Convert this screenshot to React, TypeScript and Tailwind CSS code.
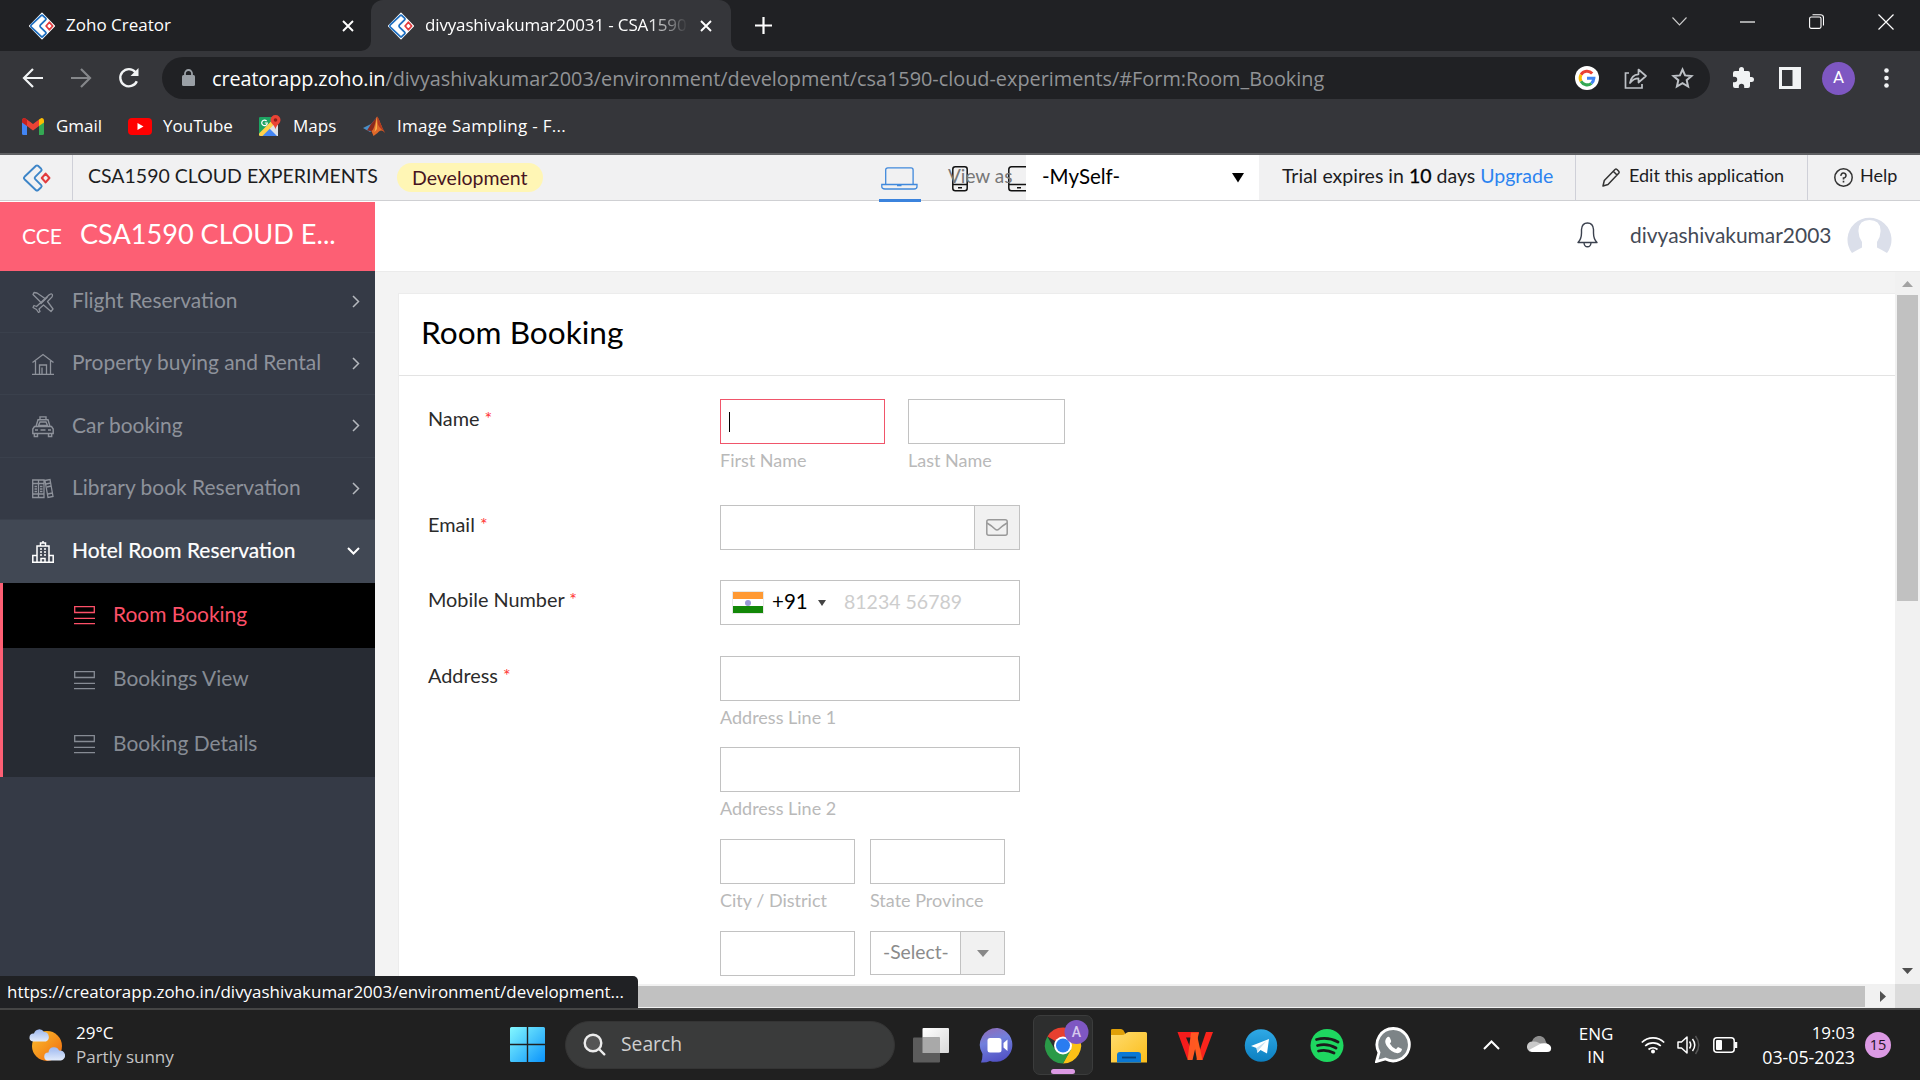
import type { ReactNode } from 'react';

const UI = "font-['Open_Sans','Noto_Sans',sans-serif]";

function ZohoMark({ size, outlined }: { size: number; outlined?: boolean }) {
  return (
    <svg width={size} height={size} viewBox="0 0 28 28" fill="none" className="shrink-0 overflow-visible">
      {outlined && <path d="M14 -1 28.500 14 14 29 -.5 14Z" fill="#fff" stroke="#fff" strokeWidth="1.500" strokeLinejoin="round" />}
      <path
        d="M13 1.8 1.5 12.8q-1.2 1.2 0 2.4L13 26.2q1 .8 2 0l3.2-3q1-1 0-2l-6-6q-1.1-1.2 0-2.4l6-6q1-1 0-2l-3.2-3q-1-.8-2 0Z"
        stroke={outlined ? '#1f6fc0' : '#3d85c8'}
        strokeWidth={outlined ? 2.1 : 1.9}
        strokeLinejoin="round"
      />
      <path d="M22.600 9.600 26.400 14l-3.800 4.400L18.800 14Z" stroke="#e23b3e" strokeWidth="2.100" strokeLinejoin="round" />
    </svg>
  );
}

function Cross({ className }: { className?: string }) {
  return (
    <svg width="12" height="12" viewBox="0 0 12 12" className={className} stroke="#fff" strokeWidth="1.9">
      <path d="M1 1 11 11M11 1 1 11" />
    </svg>
  );
}

function TabStrip() {
  return (
    <div className="flex h-[51px] bg-[#202124] text-[17px] text-white">
      <div className="flex w-[371px] items-center rounded-br-[10px] pl-[30px]">
        <ZohoMark size={24} outlined />
        <span className="ml-3 grow pb-px">Zoho Creator</span>
        <Cross className="mr-[17px]" />
      </div>
      <div className="relative flex w-[360px] items-center rounded-t-[12px] bg-[#35363a] pl-[18px]">
        <svg className="absolute bottom-0 -left-[10px]" width="10" height="10" fill="#35363a"><path d="M10 0V10H0A10 10 0 0 0 10 0" /></svg>
        <svg className="absolute -right-[10px] bottom-0" width="10" height="10" fill="#35363a"><path d="M0 0V10H10A10 10 0 0 1 0 0" /></svg>
        <ZohoMark size={24} outlined />
        <div className="ml-3 w-[263px] overflow-hidden pb-px whitespace-nowrap tracking-[-0.15px] [mask-image:linear-gradient(90deg,#000_85%,transparent)]">
          divyashivakumar20031 - CSA1590
        </div>
        <Cross className="ml-[12px]" />
      </div>
      <div className="flex grow items-center pl-[24px]">
        <svg width="17" height="17" stroke="#fff" strokeWidth="2.2"><path d="M8.5 0V17M0 8.5H17" /></svg>
      </div>
      <div className="flex h-[43px] items-center">
        <svg width="15" height="9" fill="none" stroke="#ccc" strokeWidth="1.1"><path d="M.5 .5 7.5 8 14.5 .5" /></svg>
        <svg className="ml-[53px]" width="15" height="2"><path d="M0 1H15" stroke="#fff" strokeWidth="1.2" /></svg>
        <svg className="ml-[54px]" width="15" height="15" fill="none" stroke="#fff" strokeWidth="1.1">
          <rect x=".6" y="3" width="11.4" height="11.4" rx="1.6" />
          <path d="M3.5 .7H11.5q3 0 3 3V11.5" />
        </svg>
        <svg className="mr-[26px] ml-[54px]" width="16" height="16" stroke="#fff" strokeWidth="1.2"><path d="M.5 .5 15.5 15.5M15.5 .5 .5 15.5" /></svg>
      </div>
    </div>
  );
}

function GoogleG({ className }: { className?: string }) {
  return (
    <svg width="24" height="24" viewBox="0 0 24 24" className={className} fill="none" strokeWidth="3">
      <circle cx="12" cy="12" r="12" fill="#fff" />
      <path d="M17.2 7.5A6.9 6.9 0 0 0 6 8.700" stroke="#ea4335" />
      <path d="M6 8.700A6.900 6.900 0 0 0 6 15.300" stroke="#fbbc05" />
      <path d="M6 15.300A6.900 6.900 0 0 0 16.400 17.300" stroke="#34a853" />
      <path d="M16.400 17.300A6.900 6.900 0 0 0 18.900 12.300H12" stroke="#4285f4" />
    </svg>
  );
}

function Toolbar() {
  return (
    <div className="flex h-[54px] items-center bg-[#35363a]">
      <svg className="ml-[22px]" width="22" height="20" fill="none" stroke="#f1f3f4" strokeWidth="2.2"><path d="M21 10H2M11 1 2 10 11 19" /></svg>
      <svg className="ml-[26px]" width="22" height="20" fill="none" stroke="#85878a" strokeWidth="2.2"><path d="M1 10H20M11 1 20 10 11 19" /></svg>
      <svg className="ml-[26px]" width="22" height="22" fill="none" stroke="#f1f3f4" strokeWidth="2.4">
        <path d="M18.8 14.2A8.6 8.6 0 1 1 17.5 5.2" />
        <path d="M20.5 1V9H12.5Z" fill="#f1f3f4" stroke="none" />
      </svg>
      <div className="ml-[22px] flex h-[42px] w-[1548px] items-center rounded-full bg-[#202124] pl-[20px]">
        <svg width="13" height="18" fill="#9aa0a6"><rect y="6" width="13" height="11" rx="1.5" /><path d="M3 7V4.500a3.500 3.500 0 0 1 7 0V7" fill="none" stroke="#9aa0a6" strokeWidth="1.8" /></svg>
        <div className="mt-px ml-[17px] grow whitespace-nowrap text-[19.850px] text-[#919396]"><span className="tracking-[-0.1px] text-white">creatorapp.zoho.in</span>/divyashivakumar2003/environment/development/csa1590-cloud-experiments/#Form:Room_Booking</div>
        <GoogleG className="mr-[25px]" />
        <svg className="mr-[23px]" width="24" height="22" fill="none" stroke="#bdc1c6" strokeWidth="1.7">
          <path d="M5 6H1.500V21H18V17" />
          <path d="M6 16C7 10 10 7.500 14.500 7.300V2.500L22 9 14.500 15.500V11.300C11 11.300 8.500 12.500 6 16Z" strokeLinejoin="round" />
        </svg>
        <svg className="mr-[16px]" width="23" height="22" viewBox="0 0 23 22" fill="none" stroke="#bdc1c6" strokeWidth="2"><path d="M11.500 2.500 14.100 8.400 20.500 9 15.700 13.200 17.100 19.500 11.500 16.200 5.900 19.500 7.300 13.200 2.500 9 8.900 8.400Z" /></svg>
      </div>
      <svg className="ml-[21px]" width="24" height="24" viewBox="0 0 24 24" fill="#f1f3f4"><path d="M20.500 11H19V7a2 2 0 0 0-2-2h-4V3.500a2.500 2.500 0 0 0-5 0V5H4a2 2 0 0 0-2 2v3.800h1.500a2.700 2.700 0 0 1 0 5.400H2V20a2 2 0 0 0 2 2h3.800v-1.500a2.700 2.700 0 0 1 5.400 0V22H17a2 2 0 0 0 2-2v-4h1.500a2.500 2.500 0 0 0 0-5z" /></svg>
      <svg className="ml-[24px]" width="22" height="22" fill="none"><path fillRule="evenodd" d="M0 0H22V22H0ZM3 3V19H13.500V3Z" fill="#f1f3f4" /></svg>
      <div className="ml-[21px] flex size-[33px] items-center justify-center rounded-full bg-[#7e57c2] font-[Roboto] text-[17px] text-white">A</div>
      <svg className="ml-[29px]" width="5" height="20" fill="#f1f3f4"><circle cx="2.500" cy="2.500" r="2.300" /><circle cx="2.500" cy="10" r="2.300" /><circle cx="2.500" cy="17.500" r="2.300" /></svg>
    </div>
  );
}

function Bookmarks() {
  return (
    <div className="flex h-[50px] items-start border-b-2 border-[#5f6063] bg-[#35363a] pt-[8px] text-[17px] text-white">
      <div className="flex h-[26px] items-center">
        <svg className="ml-[22px]" width="22" height="17" viewBox="0 0 22 17">
          <path d="M0 3V15.500Q0 17 1.500 17H5V7Z" fill="#4285f4" />
          <path d="M17 7V17H20.500Q22 17 22 15.500V3Z" fill="#34a853" />
          <path d="M17 1.500V8L22 4.500V3Q22 0 19.500 0Z" fill="#fbbc04" />
          <path d="M0 3Q0 0 2.500 0L5 1.500 11 6 17 1.500V8L11 12.500 5 8Z" fill="#ea4335" />
          <path d="M0 3Q0 0 2.500 0L5 1.500V8L0 4.500Z" fill="#c5221f" />
        </svg>
        <span className="ml-[12px] w-[46px]">Gmail</span>
        <svg className="ml-[26px]" width="24" height="17"><rect width="24" height="17" rx="4" fill="#f00" /><path d="M9.500 5 15.500 8.500 9.500 12Z" fill="#fff" /></svg>
        <span className="ml-[11px] w-[70px]">YouTube</span>
        <svg className="ml-[26px]" width="22" height="22" viewBox="0 0 22 22">
          <rect y="2" width="19" height="19" rx="1.500" fill="#1da462" />
          <path d="M19 2V21H17L7.500 11.500 17 2Z" fill="#dfe3e8" />
          <path d="M1 21 9.500 12.500 18 21Z" fill="#4285f4" />
          <path d="M0 18.500 15 3.500 18 6.500 3.500 21H1.500Q0 21 0 19.500Z" fill="#ffd04b" />
          <path d="M0 17V3.500Q0 2 1.500 2H14Z" fill="#1da462" />
          <path d="M7.600 6A2.800 2.800 0 1 0 8.300 8H5.800" fill="none" stroke="#fff" strokeWidth="1.200" />
          <path d="M16.500 14.500C16 10 11.500 9 11.500 5a5 5 0 0 1 10 0C21.500 9 17 10 16.500 14.500Z" fill="#ea4335" />
          <circle cx="16.500" cy="5" r="1.800" fill="#8c1d18" />
        </svg>
        <span className="ml-[12px] w-[45px]">Maps</span>
        <svg className="ml-[25px]" width="22" height="20" viewBox="0 0 22 20">
          <path d="M0 12 8 8 14 1 10 14 7 16Z" fill="#4a8fc7" />
          <path d="M4 14.500 8 8 14 1 11 19 8 15Z" fill="#8b2a1d" />
          <path d="M14 .5C16 2 18 10 22 17 19 13.500 17 14 14.500 17L10.500 20 8.500 15C12 13 12.500 3 14 .5Z" fill="#e0692a" />
          <path d="M14 .5C16 2 18 10 22 17 19 13 16 12 14.800 8Z" fill="#b23a20" />
          <path d="M14 1C13 6 12.500 12 11.500 16L14 13Z" fill="#f8b04a" />
        </svg>
        <span className="ml-[12px] tracking-[0.300px]">Image Sampling - F...</span>
      </div>
    </div>
  );
}

function CreatorBar() {
  return (
    <div className="relative flex h-[46px] shrink-0 border-b border-[#cfd0d3] bg-[#f1f1f2] text-[19.5px] text-[#1d1d1f]">
      <div className="flex w-[73px] items-center border-r border-[#cfd0d8] pl-[23px]"><ZohoMark size={28} /></div>
      <div className="flex w-[806px] items-center pl-[15px]">
        <span className="-mt-[4px] whitespace-nowrap">CSA1590 CLOUD EXPERIMENTS</span>
        <span className="ml-[19px] flex h-[29px] w-[146px] items-center justify-center rounded-full bg-[#fff6b5] text-[#47151f]">Development</span>
      </div>
      <div className="relative flex w-[147px] items-start overflow-visible">
        <span className="absolute top-[44px] left-0 z-10 h-[3px] w-[42px] bg-[#3b83dd]" />
        <svg className="mt-[12px] ml-[2px] shrink-0" width="37" height="23" fill="none" stroke="#4089dc" strokeWidth="1.300">
          <path d="M4.700 17V3Q4.700 .9 6.800 .9H30Q32.100 .9 32.100 3V17" />
          <path d="M.8 17.500H36V19.500Q36 22 33 22H4Q.8 22 .8 19.500ZM16 18.500H20.500" />
        </svg>
        <svg className="mt-[11px] ml-[34px] shrink-0" width="16" height="26" fill="none" stroke="#111" strokeWidth="1.500">
          <rect x=".8" y=".8" width="14.400" height="24" rx="2.500" /><path d="M1 18.500H15M6 21.800H10" />
        </svg>
        <svg className="mt-[11px] ml-[40px] shrink-0" width="18" height="26" fill="none" stroke="#111" strokeWidth="1.500">
          <path d="M18 .8H3.500Q.8 .8 .8 3.500V22Q.8 24.800 3.500 24.800H18M1 18.500H18M9 21.800H13" />
        </svg>
        <span className="absolute top-[7px] left-[69px] text-[19px] text-[#777]">View as</span>
      </div>
      <div className="flex w-[233px] items-center justify-between bg-white pr-[15px] pl-[16px] text-[20.500px] text-black">
        <span className="-mt-[3px]">-MySelf-</span>
        <svg width="12" height="10"><path d="M0 0H12L6 9.500Z" /></svg>
      </div>
      <div className="flex w-[317px] items-center border-r border-[#cfd0d8] pb-[4px] pl-[23px] whitespace-pre">Trial expires in <b className="font-normal text-black [-webkit-text-stroke:0.3px_#000]">10</b> days <span className="text-[#2c83f0]">Upgrade</span></div>
      <div className="flex w-[232px] items-center border-r border-[#cfd0d8] pl-[26px] text-[18px]">
        <svg width="18" height="19" fill="none" stroke="#333" strokeWidth="1.500" strokeLinejoin="round"><path d="M1 18 2.300 12.500 13 1.500Q14 .7 15 1.500L16.700 3.300Q17.500 4.200 16.700 5.200L6 16.500ZM11.500 3.500 15 7" /></svg>
        <span className="-mt-[4px] ml-[9px] whitespace-nowrap">Edit this application</span>
      </div>
      <div className="flex items-center pl-[26px] text-[18px]">
        <svg width="19" height="19" fill="none" stroke="#333" strokeWidth="1.500"><circle cx="9.500" cy="9.500" r="8.700" /><path d="M7 7.800A2.500 2.500 0 1 1 9.500 10V11.500M9.500 12.700V14.500" strokeWidth="1.600" /></svg>
        <span className="-mt-[4px] ml-[7px]">Help</span>
      </div>
    </div>
  );
}

const ico = { width: 22, height: 22, fill: 'none', stroke: 'currentColor', strokeWidth: 1.3, className: 'shrink-0' } as const;

const PlaneIcon = () => (
  <svg {...ico} strokeLinejoin="round">
    <path d="M17.500 3.500Q20.500 2 20.500 4.500 20.500 6 18.500 7.500L15.500 10.500 21 18 19 20.500 11.500 14 7 18 8 20.500 6.500 21.500 4.500 18.500 1 16.500 2 14.500 4.500 15.500Z" />
    <path d="M13 7.500 5 2 2 1.500 1 3.500 9 11.500M8.500 13 15.500 6" />
  </svg>
);
const HouseIcon = () => (
  <svg {...ico}><path d="M.5 9.500 11 1.500 21.500 9.500M3.500 8V21M18.500 8V21M0 21.300H22M7.500 21V12H14.500V21M10 21V14.500" /></svg>
);
const CarIcon = () => (
  <svg {...ico} strokeWidth={1.4}>
    <path d="M8 3V.9H14V3M4 10.500 6 3.700H16L18 10.500M6.500 9.500 8 6H14L15.500 9.500ZM2.500 10.500H19.500L21.200 13V17.500H.8V13ZM2.300 17.500V20.500H5.500V17.500M16.500 17.500V20.500H19.700V17.500M3 14H6M16 14H19M8.500 14H13.500" />
  </svg>
);
const BooksIcon = () => (
  <svg {...ico}>
    <path d="M.7 2H6.500V19.500H.7ZM6.500 2H12V19.500H6.500ZM13 2.500 18 1.500 21 18.500 16 19.500ZM.7 16H12M.7 5.500H12M2.500 8.500H5M2.500 11H5M2.500 13.500H5M8 8.500H10.500M8 11H10.500M8 13.500H10.500M14 6 18.500 5M15 9 19 8M16 16 20.300 15" />
  </svg>
);
const HotelIcon = () => (
  <svg {...ico} strokeWidth={1.5}>
    <path d="M5 20.500V5H17V20.500M.8 21.200V14.500H5M17 14.500H21.200V21.200M0 21.300H22M8.500 5V2H13.500V5M11 0V2M8 8H10M12 8H14M8 11H10M12 11H14M8 14H10M12 14H14M9 21V17.500H13V21" />
  </svg>
);
const ListIcon = () => (
  <svg width="21" height="19" fill="none" stroke="currentColor" strokeWidth="1.300" className="shrink-0"><path d="M.7 .7H20.300V6.500H.7ZM0 12.300H21M0 17.700H21" /></svg>
);

const menu: { label: string; icon: ReactNode; h: string }[] = [
  { label: 'Flight Reservation', icon: <PlaneIcon />, h: 'h-[62px]' },
  { label: 'Property buying and Rental', icon: <HouseIcon />, h: 'h-[62px]' },
  { label: 'Car booking', icon: <CarIcon />, h: 'h-[63px]' },
  { label: 'Library book Reservation', icon: <BooksIcon />, h: 'h-[62px]' },
];
const pages = [
  { label: 'Room Booking', cls: 'h-[65px] bg-black text-[#fd5068]' },
  { label: 'Bookings View', cls: 'h-[64px] text-[#868b94]' },
  { label: 'Booking Details', cls: 'h-[65px] text-[#868b94]' },
];

function Sidebar() {
  return (
    <aside className="flex w-[375px] shrink-0 flex-col bg-[#353a46] text-[20.950px] text-[#8e929b]">
      <div className="flex h-[69px] items-baseline bg-[#fd5f74] pt-[13px] pl-[22px] text-white">
        <span className="w-[58px] text-[21px]">CCE</span>
        <span className="text-[27.100px] leading-[38px]">CSA1590 CLOUD E...</span>
      </div>
      {menu.map((m) => (
        <div key={m.label} className={`flex items-center border-b border-[#3a404c] pl-[32px] ${m.h}`}>
          <span className="mt-px">{m.icon}</span>
          <span className="ml-[18px] grow pb-[3px]">{m.label}</span>
          <svg className="mr-[15px] mb-px" width="8" height="13" fill="none" stroke="#b5b8be" strokeWidth="1.500"><path d="M1 1 6.500 6.500 1 12" /></svg>
        </div>
      ))}
      <div className="flex h-[63px] items-center bg-[#414854] pl-[32px] text-white">
        <span className="mt-px"><HotelIcon /></span>
        <span className="ml-[18px] grow pb-[3px] [-webkit-text-stroke:0.2px_#fff]">Hotel Room Reservation</span>
        <svg className="mr-[15px] mb-px" width="13" height="8" fill="none" stroke="#fff" strokeWidth="2"><path d="M1 1 6.500 6.500 12 1" /></svg>
      </div>
      <div className="border-l-[3px] border-[#fd5f74] bg-[#272b33]">
        {pages.map((p) => (
          <div key={p.label} className={`flex items-center pl-[71px] ${p.cls}`}>
            <ListIcon />
            <span className="ml-[18px] pb-[4px]">{p.label}</span>
          </div>
        ))}
      </div>
    </aside>
  );
}

function UserHeader() {
  return (
    <div className="flex h-[70px] items-center border-b border-[#ebebeb] bg-white pb-[3px]">
      <svg className="ml-[1202px]" width="21" height="26" fill="none" stroke="#3b414e" strokeWidth="1.400" strokeLinejoin="round">
        <path d="M1 20.500Q4.500 17 4.500 11V7.500Q5 1 10.500 1T16.500 7.500V11Q16.500 17 20 20.500ZM7 21Q7.500 24.800 10.500 24.800T14 21" />
      </svg>
      <span className="ml-[32px] w-[202px] pb-px text-[20.950px] text-[#444a56]">divyashivakumar2003</span>
      <svg className="ml-[15px]" width="45" height="38" viewBox="0 0 45 38">
        <path d="M5 37A22 22 0 1 1 40 37Q35 34 30 31.500V26Q34 20 33.500 14 33 4 22.500 4T11.500 14Q11 20 15 26V31.500Q10 34 5 37Z" fill="#dbdfea" />
      </svg>
    </div>
  );
}

function Box({ w, focus, children }: { w: string; focus?: boolean; children?: ReactNode }) {
  return <div className={`flex h-[45px] shrink-0 items-center border bg-white ${w} ${focus ? 'border-[#f0556a]' : 'border-[#c2c2c2]'}`}>{children}</div>;
}
const Sub = ({ children }: { children: ReactNode }) => <div className="h-[27px] pt-[4px] text-[18px] leading-[24px] whitespace-nowrap text-[#b9b9b9]">{children}</div>;

function Row({ label, h, children }: { label: string; h: string; children: ReactNode }) {
  return (
    <div className={`flex ${h}`}>
      <div className="w-[292px] pt-[5px] text-[19.850px] leading-[29px] text-[#2b2b2b]">{label} <span className="relative -top-[1px] text-[18px] text-[#f33]">*</span></div>
      <div>{children}</div>
    </div>
  );
}

function BookingForm() {
  return (
    <div className="flex h-[712px] overflow-hidden">
      <div className="ml-[23px] flex w-[1497px] flex-col">
        <div className="h-[21px] shrink-0" />
        <div className="grow border-t border-l border-[#ececec] bg-white">
          <h1 className="flex h-[82px] items-center border-b border-[#e3e3e3] pb-[4px] pl-[22px] text-[31.600px] text-black">Room Booking</h1>
          <div className="pt-[23px] pl-[29px]">
            <Row label="Name" h="h-[106px]">
              <div className="flex gap-[23px]">
                <div><Box w="w-[165px]" focus><span className="ml-[8px] h-[20px] w-px bg-black" /></Box><Sub>First Name</Sub></div>
                <div><Box w="w-[157px]" /><Sub>Last Name</Sub></div>
              </div>
            </Row>
            <Row label="Email" h="h-[75px]">
              <Box w="w-[300px]">
                <div className="grow" />
                <div className="flex h-full w-[45px] items-center justify-center border-l border-[#c2c2c2] bg-[#f1f1f1]">
                  <svg width="22" height="17" fill="none" stroke="#999" strokeWidth="1.500"><rect x=".8" y=".8" width="20.400" height="15.400" rx="2" /><path d="M1 4Q6 7 9 10Q11 12 13 10Q16 7 21 4" /></svg>
                </div>
              </Box>
            </Row>
            <Row label="Mobile Number" h="h-[76px]">
              <Box w="w-[300px]">
                <div className="relative ml-[11px] flex h-[23px] w-[32px] flex-col border border-[#e8e8e8]">
                  <div className="h-[7px] bg-[#f93]" /><div className="h-[7px] bg-white" /><div className="h-[7px] bg-[#138808]" />
                  <span className="absolute top-[7.500px] left-[12px] size-[6px] rounded-full bg-[#9a9ad6]" />
                </div>
                <span className="ml-[8px] w-[37px] pb-[3px] text-[20.500px] text-black">+91</span>
                <svg className="ml-[9px]" width="8" height="6" fill="#444"><path d="M0 0H8L4 6Z" /></svg>
                <span className="ml-[18px] pb-[2px] text-[19.500px] text-[#cdcdcd]">81234 56789</span>
              </Box>
            </Row>
            <Row label="Address" h="h-[330px]">
              <div className="h-[91px]"><Box w="w-[300px]" /><Sub>Address Line 1</Sub></div>
              <div className="h-[92px]"><Box w="w-[300px]" /><Sub>Address Line 2</Sub></div>
              <div className="flex h-[92px] gap-[15px]">
                <div><Box w="w-[135px]" /><Sub>City / District</Sub></div>
                <div><Box w="w-[135px]" /><Sub>State Province</Sub></div>
              </div>
              <div className="flex gap-[15px]">
                <Box w="w-[135px]" />
                <div className="flex h-[44px] w-[135px] items-center border border-[#c2c2c2] text-[19.300px] text-[#8b8b8b]">
                  <span className="w-[89px] pb-[2px] pl-[12px]">-Select-</span>
                  <div className="flex h-full grow items-center justify-center border-l border-[#c2c2c2] bg-[#f1f1f1]"><svg width="12" height="7" fill="#888"><path d="M0 0H12L6 7Z" /></svg></div>
                </div>
              </div>
            </Row>
          </div>
        </div>
      </div>
      <div className="flex w-[25px] flex-col items-center bg-[#f1f1f1]">
        <svg className="mt-[9px]" width="11" height="6" fill="#a3a3a3"><path d="M0 6H11L5.500 0Z" /></svg>
        <div className="mt-[8px] h-[306px] w-[21px] bg-[#c1c1c1]" />
        <svg className="mt-auto mb-[10px]" width="11" height="6" fill="#505050"><path d="M0 0H11L5.500 6Z" /></svg>
      </div>
    </div>
  );
}

function TaskIcon({ ml, children }: { ml: string; children: ReactNode }) {
  return <svg className={`shrink-0 ${ml}`} width="36" height="36" viewBox="0 0 36 36">{children}</svg>;
}

function Taskbar() {
  return (
    <div className="flex h-[72px] items-center border-t-2 border-[#454545] bg-[#202020] pb-px text-[17px] text-white">
      <svg className="ml-[29px]" width="36" height="34" viewBox="0 0 36 34">
        <defs>
          <linearGradient id="sun" x1="0" y1="0" x2="1" y2="1"><stop stopColor="#fbc02f" /><stop offset="1" stopColor="#f0680c" /></linearGradient>
          <linearGradient id="cloud" x1="0" y1="0" x2="0" y2="1"><stop stopColor="#9db8f0" /><stop offset="1" stopColor="#e2ebfb" /></linearGradient>
        </defs>
        <circle cx="18" cy="18" r="15" fill="url(#sun)" />
        <path d="M4 13.500A4 4 0 0 1 5 5.500 5.500 5.500 0 0 1 15 4 5 5 0 0 1 17 13.500Z" fill="url(#cloud)" />
        <path d="M19 32.500A4 4 0 0 1 19.500 24.500 5.500 5.500 0 0 1 30 22.500 5 5 0 0 1 32 32.500Z" fill="url(#cloud)" />
      </svg>
      <div className="ml-[11px] w-[434px] leading-[24px]"><div>29°C</div><div className="text-[#c4c4c4]">Partly sunny</div></div>
      <svg width="35" height="35">
        <defs><linearGradient id="win" gradientUnits="userSpaceOnUse" x1="0" y1="0" x2="35" y2="35"><stop stopColor="#83f8ff" /><stop offset=".5" stopColor="#48c6fc" /><stop offset="1" stopColor="#0a93fb" /></linearGradient></defs>
        <path d="M1.500 0H16.800V16.800H0V1.500Q0 0 1.500 0M18.200 0H33.500Q35 0 35 1.500V16.800H18.200ZM0 18.200H16.800V35H1.500Q0 35 0 33.500ZM18.200 18.200H35V33.500Q35 35 33.500 35H18.200Z" fill="url(#win)" />
      </svg>
      <div className="ml-[20px] flex h-[48px] w-[330px] items-center rounded-full border border-[#343434] bg-[#3a3b3b] pl-[17px] text-[19.300px] text-[#cfcfcf]">
        <svg width="23" height="23" fill="#555" stroke="#ececec" strokeWidth="2.400" strokeLinecap="round"><circle cx="10" cy="10" r="8.300" /><path d="M16 16 21.300 21.300" /></svg>
        <span className="ml-[15px]">Search</span>
      </div>
      <TaskIcon ml="ml-[18px]">
        <defs><linearGradient id="tv" x1="0" y1="0" x2="1" y2="1"><stop stopColor="#fff" /><stop offset="1" stopColor="#d8d8d8" /></linearGradient></defs>
        <rect x="9.500" y="1" width="26.500" height="25" rx="1" fill="url(#tv)" />
        <rect x="0" y="10.500" width="27" height="25" rx="1" fill="#5c5c5c" />
        <rect x="9.500" y="10.500" width="17.500" height="15.500" fill="#a9a9a9" />
      </TaskIcon>
      <TaskIcon ml="ml-[30px]">
        <defs><linearGradient id="chat" x1=".2" y1="0" x2=".5" y2="1"><stop stopColor="#8f6cb8" /><stop offset=".4" stopColor="#7180dc" /><stop offset="1" stopColor="#5151c4" /></linearGradient></defs>
        <path d="M18.500 1A17 17 0 1 1 11 34Q7 36 2 35.500 3.500 32 3.500 27A17 17 0 0 1 18.500 1Z" fill="url(#chat)" />
        <rect x="8.500" y="11" width="14" height="14.500" rx="2.500" fill="#fff" />
        <path d="M24.500 16 28.500 12.500V24L24.500 20.500Z" fill="#fff" />
      </TaskIcon>
      <div className="relative ml-[18px] h-[60px] w-[60px] rounded-[7px] border border-[#3b3c3c] bg-[#2d2e2e]">
        <svg className="absolute top-[9px] left-[11px] overflow-visible" width="46" height="46" viewBox="0 0 46 46">
          <path d="M18 20.500 2.400 11.500A18 18 0 0 1 33.600 11.500Z" fill="#e8402f" />
          <path d="M18 20.500 33.600 11.500A18 18 0 0 1 18 38.500L25.800 24Z" fill="#fbc116" />
          <path d="M18 20.500 25.800 25 18 38.500A18 18 0 0 1 2.400 11.500L10.200 25Z" fill="#2a9a48" />
          <circle cx="18" cy="20.500" r="9" fill="#fff" /><circle cx="18" cy="20.500" r="7" fill="#2a7cf0" />
          <circle cx="31.500" cy="7" r="12" fill="#7e57c2" />
          <text x="31.500" y="12" textAnchor="middle" fontFamily="Roboto" fontWeight="500" fontSize="14" fill="#d6c8ee">A</text>
        </svg>
        <span className="absolute bottom-0 left-[17px] h-[5px] w-[24px] rounded-full bg-[#dc9ae4]" />
      </div>
      <TaskIcon ml="ml-[18px]">
        <defs><linearGradient id="fold" x1="0" y1="0" x2="1" y2="1"><stop stopColor="#ffdc6e" /><stop offset="1" stopColor="#fbbd1a" /></linearGradient></defs>
        <path d="M0 8V3Q0 2 1.500 2H10Q11.500 2 12.500 3.500L14 6V10H0Z" fill="#e0a008" />
        <path d="M0 8H11Q13 8 14.500 6.500 16 5 17.500 5H34.500Q36 5 36 6.500V35.500H0Z" fill="url(#fold)" />
        <path d="M6 35.500V28Q6 25 9 25H27Q30 25 30 28V35.500Z" fill="#0a78d4" /><path d="M11 30.500H25" stroke="#05427c" strokeWidth="1.800" />
      </TaskIcon>
      <TaskIcon ml="ml-[30px]">
        <path d="M.5 5H22L20 10.500H9L13.500 21 10.500 32.500Z" fill="#f61c1c" />
        <path d="M14 5.500H22L15.500 33H10.500Z" fill="#ff5722" />
        <path d="M36 5 25.500 33H19.500L29 5Z" fill="#f9241c" />
        <path d="M17 16 20 8 25.500 33H20Z" fill="#ff5a1f" />
      </TaskIcon>
      <TaskIcon ml="ml-[30px]">
        <defs><linearGradient id="tg" x1="0" y1="0" x2="0" y2="1"><stop stopColor="#2fa9e6" /><stop offset="1" stopColor="#0c7fc0" /></linearGradient></defs>
        <circle cx="18" cy="18.500" r="16.200" fill="url(#tg)" />
        <path d="M8 19 26 12 24 26.500 17.500 23 14.500 26 13.500 21Z" fill="#fff" /><path d="M13.500 21 23.500 14 16 22.500 14.500 26Z" fill="#c4dff0" />
      </TaskIcon>
      <TaskIcon ml="ml-[30px]">
        <circle cx="18" cy="18.500" r="16.500" fill="#1ed760" />
        <path d="M7.500 12.500Q19 9.500 29 15M8.500 18.500Q18.500 16 27 21M9.500 24Q17.500 22 25 26" fill="none" stroke="#1b1b1b" strokeWidth="2.800" strokeLinecap="round" />
      </TaskIcon>
      <TaskIcon ml="ml-[30px]">
        <path d="M18.500 1.500A16.200 16.200 0 1 1 10.500 32L1.500 34.500 4 25.500A16.200 16.200 0 0 1 18.500 1.500Z" fill="#7d8487" stroke="#fff" strokeWidth="2.800" />
        <path d="M12.500 10Q14 9 15 11L16.200 14Q16 15.500 14.800 16.500 17 20.500 21 22.200L23 20 27 22Q26.500 26 22.500 26.200 16 25.500 11.500 18.500 8.500 13.500 12.500 10Z" fill="#fff" />
      </TaskIcon>
      <div className="flex grow items-center">
        <svg className="ml-[72px]" width="17" height="10" fill="none" stroke="#fff" strokeWidth="2"><path d="M1 9 8.500 1.500 16 9" /></svg>
        <svg className="ml-[27px]" width="25" height="17" viewBox="0 0 25 17">
          <path d="M5 8A7 7 0 0 1 19 6L22 12H5Z" fill="#8e8e8e" /><path d="M4.500 16A5 5 0 0 1 6 5.500Q11 5 19 11L14 16Z" fill="#c9c9c9" /><path d="M5 16 2 14 14 7.500Q22 6 24 11 25 16 20 16Z" fill="#fff" />
        </svg>
        <div className="ml-[24px] w-[40px] text-center leading-[23px]"><div>ENG</div><div>IN</div></div>
        <svg className="ml-[25px]" width="24" height="18" fill="none" stroke="#fff" strokeWidth="1.700"><path d="M.8 6.500A16 16 0 0 1 23.200 6.500M4.200 10A11.500 11.500 0 0 1 19.800 10M7.500 13.500A7 7 0 0 1 16.500 13.500" /><circle cx="12" cy="15.500" r="2" fill="#fff" stroke="none" /></svg>
        <svg className="ml-[12px]" width="24" height="20" fill="none" stroke="#fff" strokeWidth="1.500" strokeLinejoin="round"><path d="M1 7H4.500L10 2V18L4.500 13H1ZM12.500 6.500Q15 10 12.500 13.500M15.500 4Q20 10 15.500 16" /><path d="M18.500 1Q25 10 18.500 19" stroke="#555" /></svg>
        <svg className="ml-[12px]" width="25" height="16" fill="none" stroke="#fff" strokeWidth="1.500"><rect x=".8" y=".8" width="20.400" height="14.400" rx="3" /><rect x="3" y="3" width="6" height="10" fill="#fff" stroke="none" rx="1" /><path d="M23 5V11" strokeWidth="2.500" /></svg>
        <div className="ml-[19px] w-[98px] text-right leading-[24px]"><div>19:03</div><div className="text-[17.800px]">03-05-2023</div></div>
        <span className="ml-[10px] flex size-[26px] items-center justify-center rounded-full bg-[#dc9ae4] text-[14.500px] text-[#20101f]">15</span>
      </div>
    </div>
  );
}

export default function App() {
  return (
    <div className={`h-[1080px] w-[1920px] overflow-hidden bg-[#f3f3f3] ${UI}`}>
      <TabStrip />
      <Toolbar />
      <Bookmarks />
      <div className="relative flex h-[853px] flex-col overflow-hidden bg-white font-[Lato,sans-serif]">
        <CreatorBar />
        <div className="mt-px flex grow">
          <Sidebar />
          <main className="flex w-[1545px] flex-col bg-[#f3f3f3]">
            <UserHeader />
            <BookingForm />
            <div className="flex h-[24px] bg-[#f1f1f1]">
              <div className="mt-[2px] h-[21px] w-[1490px] bg-[#c1c1c1]" />
              <svg className="mt-[7px] ml-[15px]" width="6" height="11" fill="#505050"><path d="M0 0V11L6 5.500Z" /></svg>
              <div className="ml-auto w-[25px] bg-[#dcdcdc]" />
            </div>
          </main>
        </div>
        <div className={`absolute bottom-0 left-0 flex h-[32px] w-[638px] items-center rounded-tr-[5px] bg-[#202124] pl-[7px] text-[16.940px] whitespace-nowrap text-white ${UI}`}>
          https://creatorapp.zoho.in/divyashivakumar2003/environment/development...
        </div>
      </div>
      <Taskbar />
    </div>
  );
}
